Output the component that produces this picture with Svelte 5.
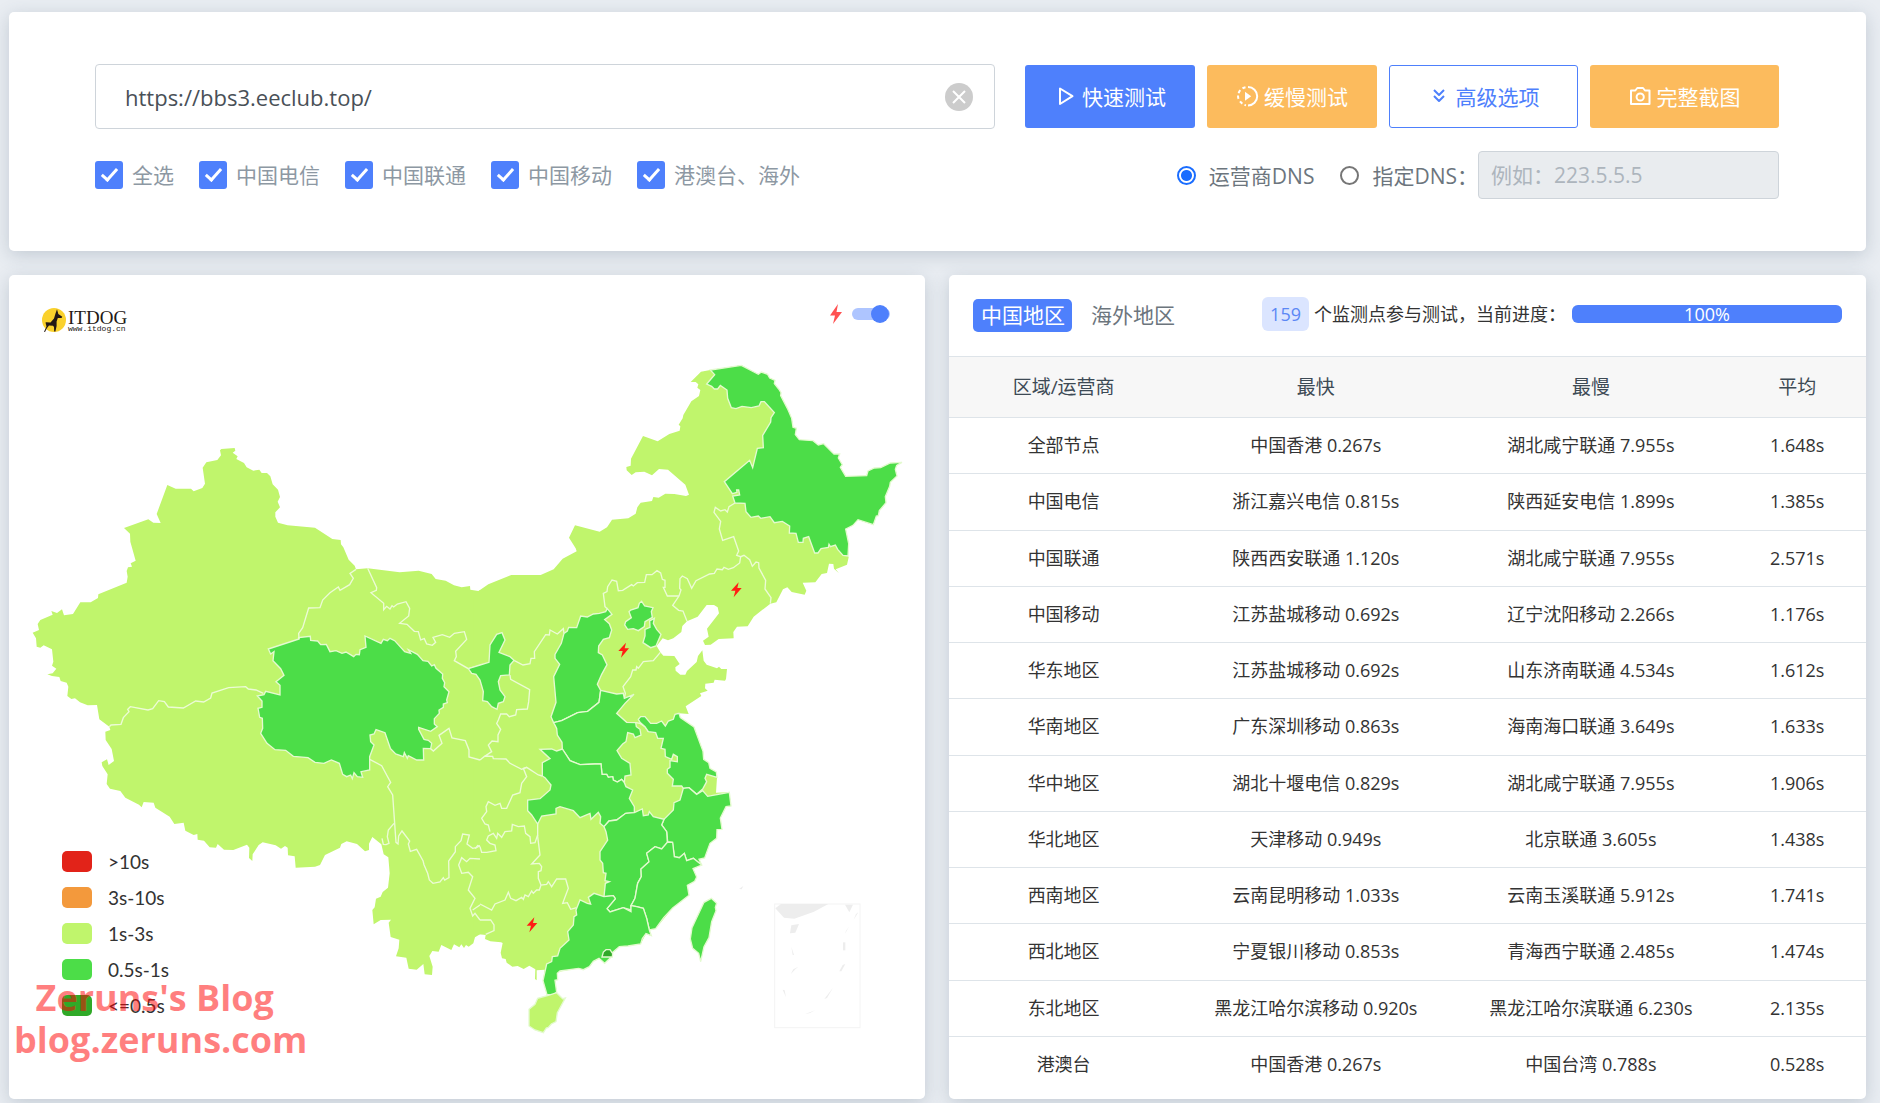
<script>
  let url = $state('https://bbs3.eeclub.top/');
  let dnsMode = $state('isp');
  let highlight = $state(true);
  let activeTab = $state('中国地区');
  const progress = 100;

  const carriers = ['全选', '中国电信', '中国联通', '中国移动', '港澳台、海外'];
  const tabs = ['中国地区', '海外地区'];

  const legend = [
    { label: '>10s', tone: 'red' },
    { label: '3s-10s', tone: 'orange' },
    { label: '1s-3s', tone: 'lime' },
    { label: '0.5s-1s', tone: 'green' },
    { label: '<=0.5s', tone: 'dark' }
  ];

  const rows = [
    ['全部节点', '中国香港 0.267s', '湖北咸宁联通 7.955s', '1.648s'],
    ['中国电信', '浙江嘉兴电信 0.815s', '陕西延安电信 1.899s', '1.385s'],
    ['中国联通', '陕西西安联通 1.120s', '湖北咸宁联通 7.955s', '2.571s'],
    ['中国移动', '江苏盐城移动 0.692s', '辽宁沈阳移动 2.266s', '1.176s'],
    ['华东地区', '江苏盐城移动 0.692s', '山东济南联通 4.534s', '1.612s'],
    ['华南地区', '广东深圳移动 0.863s', '海南海口联通 3.649s', '1.633s'],
    ['华中地区', '湖北十堰电信 0.829s', '湖北咸宁联通 7.955s', '1.906s'],
    ['华北地区', '天津移动 0.949s', '北京联通 3.605s', '1.438s'],
    ['西南地区', '云南昆明移动 1.033s', '云南玉溪联通 5.912s', '1.741s'],
    ['西北地区', '宁夏银川移动 0.853s', '青海西宁联通 2.485s', '1.474s'],
    ['东北地区', '黑龙江哈尔滨移动 0.920s', '黑龙江哈尔滨联通 6.230s', '2.135s'],
    ['港澳台', '中国香港 0.267s', '中国台湾 0.788s', '0.528s']
  ];

  // Land outline, western half
  const westLand =
    'M98,1088 117,1080 113,1062 121,1050 158,1034 154,1023 171,1029 186,1018 192,1036 219,1032 241,997 272,997 294,984 295,973 380,938 383,920 380,903 384,892 396,890 392,880 407,872 391,815 390,791 372,774 445,748 460,758 482,759 470,732 502,645 527,656 573,656 581,664 607,654 615,641 608,593 619,577 652,570 663,556 660,541 664,537 704,534 706,542 698,548 713,559 709,567 732,579 740,592 760,602 778,599 785,609 801,609 811,619 818,643 834,659 840,681 833,695 840,712 826,727 826,740 834,758 863,766 945,773 997,807 1022,810 1023,823 1030,832 1046,869 1064,887 1068,898 1103,895 1199,907 1256,902 1295,912 1307,927 1337,932 1362,946 1385,952 1410,948 1411,959 1435,963 1440,960 1500,961 1500,1990 1440,1993 1425,2002 1420,2020 1406,2030 1398,2025 1392,2034 1384,2023 1378,2032 1362,2023 1354,2040 1324,2025 1316,2045 1297,2043 1288,2058 1298,2090 1296,2115 1274,2113 1270,2082 1250,2099 1226,2096 1219,2063 1188,2059 1196,2035 1198,2009 1172,2001 1166,1958 1173,1949 1142,1950 1121,1963 1117,1920 1124,1912 1128,1886 1142,1880 1148,1866 1164,1853 1169,1810 1165,1762 1151,1753 1144,1723 1117,1701 1107,1721 1107,1740 1095,1744 1071,1722 1040,1714 1024,1722 1020,1733 975,1755 960,1785 945,1790 887,1793 884,1759 864,1756 863,1733 855,1728 843,1736 827,1726 788,1717 776,1725 758,1753 757,1773 747,1764 748,1733 741,1724 700,1740 672,1739 653,1722 648,1733 629,1732 612,1712 593,1709 592,1692 581,1695 556,1682 551,1658 523,1662 509,1640 466,1613 461,1598 431,1596 425,1612 417,1604 376,1583 361,1563 330,1556 320,1542 323,1513 307,1488 305,1477 321,1468 326,1485 342,1473 335,1437 317,1410 316,1385 331,1380 328,1370 298,1348 291,1305 263,1306 240,1297 225,1285 214,1287 202,1278 205,1250 200,1238 182,1233 178,1221 156,1218 142,1213 158,1210 169,1196 156,1187 160,1175 156,1138 131,1126 121,1133 110,1130 108,1105Z';

  // Land outline, eastern half (drawn inside the shifted group)
  const eastLand =
    'M0,750 25,733 94,705 182,705 221,688 248,656 290,634 287,625 267,593 285,556 359,575 381,562 396,539 445,535 467,521 472,502 482,488 516,483 520,471 536,473 556,461 583,462 618,468 627,464 616,434 564,389 537,387 516,406 493,395 467,397 455,405 440,391 439,381 452,377 453,356 489,288 533,304 568,282 599,272 601,259 596,254 608,235 610,225 634,184 657,168 661,150 652,143 655,133 647,126 632,126 663,95 691,90 784,76 835,103 844,96 863,103 869,114 885,121 883,131 896,147 903,158 902,167 922,205 935,235 939,262 949,265 946,284 958,299 999,302 1015,315 1031,311 1062,342 1079,342 1075,354 1087,374 1081,382 1097,409 1160,407 1164,393 1183,384 1202,383 1231,369 1266,367 1250,376 1246,388 1251,408 1231,427 1229,439 1216,470 1218,488 1198,512 1195,527 1189,528 1180,554 1134,539 1119,556 1097,567 1106,611 1104,648 1106,652 1101,674 1067,688 1077,700 1062,686 1060,672 1047,671 1041,699 1025,702 1006,727 968,728 979,752 974,764 935,756 922,742 909,748 889,787 871,791 821,830 803,859 771,860 760,876 761,895 716,897 692,914 675,915 669,902 686,890 681,866 717,820 713,802 702,795 680,795 653,830 621,844 607,858 604,876 580,895 564,901 548,895 530,918 541,937 550,947 583,948 599,972 586,982 587,992 601,1004 616,1004 621,993 650,966 654,948 667,931 671,962 680,974 711,985 717,980 724,987 741,987 738,1017 735,1022 704,1019 701,1028 676,1031 675,1045 683,1052 660,1060 664,1068 617,1099 626,1122 597,1120 601,1133 642,1161 669,1234 671,1258 686,1268 690,1285 709,1296 711,1312 708,1358 748,1357 753,1398 738,1400 721,1434 726,1468 711,1469 710,1495 690,1510 674,1554 657,1558 665,1575 639,1586 650,1611 644,1624 622,1636 627,1666 578,1704 527,1766 508,1770 514,1787 498,1781 482,1812 418,1820 374,1850 340,1864 328,1880 296,1885 236,1895 225,1921 230,1957 201,1964 189,1922 194,1889 170,1891 170,1921 165,1917 166,1888 148,1877 131,1887 113,1878 97,1880 80,1868 77,1857 66,1855 62,1838 68,1809 63,1807 31,1804 15,1797 17,1785 0,1783 -10,1785 -20,1783 -20,770Z';

  const westBorders = [
    'M1068,898 1050,910 1060,925 1049,944 1020,961 1015,951 990,968 968,990 960,1013 926,1014 908,1073 896,1090 897,1107',
    'M328,1370 333,1365 363,1363 370,1343 387,1325 383,1318 391,1310 444,1320 458,1316 476,1292 493,1295 505,1311 550,1314 587,1293 611,1296 632,1284 636,1269 686,1253 737,1250 745,1257 768,1260 790,1270',
    'M1103,895 1130,953 1129,961 1113,968 1151,1000 1151,1019 1160,1009 1170,1017 1176,1007 1181,1011 1192,1002 1218,995 1229,1015 1226,1038 1199,1060 1221,1063 1243,1084 1255,1085 1262,1110 1273,1106 1280,1122 1297,1126 1307,1117 1299,1102 1327,1094 1349,1102 1363,1090 1393,1085 1400,1108 1367,1144 1369,1160 1363,1172 1405,1196 1440,1187',
    'M1109,1468 1145,1487 1172,1537 1163,1550 1178,1575 1188,1717 1194,1722 1196,1698 1206,1683 1229,1713 1225,1722 1231,1744 1250,1738 1269,1772 1272,1784 1283,1810 1288,1830 1299,1840 1320,1836 1330,1823 1334,1830 1347,1823 1346,1773 1366,1745 1366,1730 1383,1712 1388,1692 1408,1695 1401,1722 1418,1735 1428,1733 1433,1727 1440,1730',
    'M1182,1660 1165,1680 1162,1700 1167,1720 1158,1724 1150,1723 1146,1705',
    'M1292,1436 1300,1443 1326,1420 1317,1396 1347,1375 1356,1404 1396,1412 1407,1440 1407,1461 1440,1470',
    'M1440,1767 1410,1765 1400,1775 1385,1763 1376,1785 1385,1810 1405,1807 1418,1820 1405,1860 1425,1885 1410,1915 1418,1938 1425,1930 1440,1950',
    'M1425,1735 1440,1727 M1418,1920 1440,1905'
  ];

  const eastBorders = [
    'M765,489 747,500 742,516 735,509 722,513 706,502 702,517 722,544 718,567 728,601 761,590 776,633 770,646 782,650 792,646 809,659 817,679 828,666 836,668 837,684 857,721 855,747 873,773 871,791',
    'M782,650 779,669 760,683 745,688 732,682 727,689 711,687 703,700 689,702 648,722 635,745 622,716 607,708 600,716 599,745 603,750 597,768 578,796 596,811 609,813 621,844',
    'M597,768 562,768 550,742 555,742 555,721 547,718 542,699 531,692 516,704 499,704 494,727 472,728 460,738 455,734 428,751 415,752 410,724 396,720 383,740 381,755 370,760 375,800 382,806',
    'M252,880 250,866 232,882 210,870 208,885 197,884 163,935 164,955 153,955 150,971 129,975 102,961',
    'M90,1005 92,1018 149,1049 146,1085 142,1107 110,1109 107,1125 88,1130 80,1122 62,1122 55,1140 50,1150 62,1168 54,1185 54,1205 36,1203 25,1215 35,1235 12,1250 0,1260 15,1248 38,1249 40,1256 78,1257 90,1270 125,1288 140,1282 175,1305 187,1308',
    'M541,937 520,962 490,965 475,985 470,980 468,990 458,990 452,1010 429,1040 436,1060 433,1075',
    'M467,1148 480,1150 495,1160 505,1175',
    'M140,1282 130,1285 140,1310 125,1330 120,1358 98,1365 80,1405 65,1405 60,1390 45,1396 25,1385 18,1400 20,1415 5,1435 15,1452 25,1455 30,1475',
    'M0,1520 5,1537 20,1537 48,1532 45,1515 30,1510 20,1500 25,1488 40,1480 50,1495 53,1480 65,1492 75,1475 95,1473 97,1453 115,1460 133,1458 137,1480 150,1490 152,1510 165,1508 173,1485',
    'M173,1452 173,1490 180,1545 155,1572 178,1570 185,1580 183,1592 175,1595 175,1615 183,1635',
    'M0,1692 35,1710 45,1692 75,1680 85,1657 92,1675 108,1682 125,1672 130,1678 135,1665 145,1670 155,1653 160,1660 170,1650 178,1650 183,1635 200,1633 205,1625 215,1640 230,1617 257,1617 265,1645 248,1690 262,1688 272,1708 290,1703',
    'M0,1740 32,1740 42,1755 42,1772 17,1783'
  ];

  const qinghai =
    'M805,1137 897,1107 896,1103 931,1099 932,1111 953,1113 962,1124 979,1123 990,1145 1008,1142 1026,1150 1038,1146 1061,1160 1068,1153 1078,1154 1080,1139 1098,1132 1095,1098 1143,1120 1150,1108 1162,1112 1170,1105 1184,1112 1214,1145 1232,1150 1225,1139 1252,1153 1269,1172 1284,1174 1295,1188 1303,1184 1308,1195 1328,1212 1327,1225 1334,1238 1332,1250 1347,1265 1340,1290 1342,1298 1330,1302 1330,1312 1317,1320 1318,1330 1303,1346 1303,1362 1312,1370 1292,1384 1256,1372 1256,1378 1272,1408 1285,1411 1295,1420 1292,1436 1270,1435 1271,1470 1250,1470 1225,1457 1222,1465 1213,1448 1210,1460 1187,1452 1171,1435 1155,1388 1128,1379 1122,1392 1110,1395 1112,1415 1122,1425 1109,1460 1109,1500 1083,1505 1088,1522 1072,1520 1062,1508 1057,1526 1052,1515 1040,1520 1028,1513 1018,1480 994,1470 972,1480 945,1477 924,1463 880,1459 857,1441 825,1439 801,1420 782,1390 788,1375 787,1345 779,1342 774,1315 786,1312 786,1293 772,1278 792,1274 797,1264 840,1275 840,1246 828,1235 852,1216 842,1196 819,1172 822,1145 812,1152Z';

  const fastProvinces = [
    { name: '黑龙江', d: 'M691,90 784,76 835,103 844,96 863,103 869,114 885,121 883,131 896,147 903,158 902,167 922,205 935,235 939,262 949,265 946,284 958,299 999,302 1015,315 1031,311 1062,342 1079,342 1075,354 1087,374 1081,382 1097,409 1160,407 1164,393 1183,384 1202,383 1231,369 1266,367 1250,376 1246,388 1251,408 1231,427 1229,439 1216,470 1218,488 1198,512 1195,527 1189,528 1180,554 1134,539 1119,556 1097,567 1106,611 1104,648 1089,646 1073,628 1066,615 1051,620 1047,613 1045,622 1023,626 1014,639 1004,639 986,590 970,595 969,607 955,607 948,580 928,579 929,558 907,544 883,548 870,530 842,535 835,528 813,532 798,515 795,490 765,489 758,468 779,465 776,450 770,450 771,457 757,461 733,425 809,361 818,383 832,325 850,323 848,286 872,246 873,233 883,218 853,185 843,185 837,198 814,203 786,199 768,206 754,203 743,175 741,150 721,136 713,147 703,147 695,139 680,132 704,104Z' },
    { name: '山西', d: 'M382,806 377,815 358,820 340,822 322,831 302,828 290,863 266,862 262,873 252,880 244,910 225,943 225,955 239,973 221,1010 228,1087 213,1130 221,1148 245,1142 293,1118 323,1114 357,1087 362,1051 352,1033 365,1003 381,974 367,945 355,938 356,918 370,898 388,893 395,870 388,851 374,839 396,823Z' },
    { name: '宁夏', d: 'M-35,986 0,975 27,967 30,915 50,883 66,878 75,900 57,937 90,950 102,961 90,975 88,1005 62,1007 55,1025 60,1050 75,1070 70,1085 55,1090 51,1108 35,1100 22,1085 8,1082 10,1055 0,1020 -12,1003 -25,1000Z' },
    { name: '北京', d: 'M485,784 494,798 519,803 514,815 517,832 495,845 493,860 475,872 460,866 443,868 434,855 437,845 454,833 447,815 452,810 474,803 478,790Z' },
    { name: '天津', d: 'M523,835 520,850 530,868 543,883 528,918 512,923 489,908 495,888 495,868 510,862 509,843Z' },
    { name: '河南', d: 'M362,1051 410,1062 430,1060 433,1075 462,1063 435,1090 410,1120 440,1147 467,1148 469,1160 480,1168 483,1185 465,1193 460,1182 443,1178 438,1205 428,1212 411,1232 425,1255 450,1270 453,1305 435,1308 433,1328 425,1318 412,1326 400,1320 398,1310 385,1312 380,1303 366,1303 363,1272 345,1272 300,1274 270,1262 247,1227 246,1207 232,1185 230,1165 221,1148 245,1142 293,1118 323,1114 357,1087Z' },
    { name: '湖北', d: 'M247,1227 230,1233 215,1227 180,1228 210,1256 187,1268 187,1308 195,1313 213,1335 210,1350 180,1376 143,1380 143,1412 155,1425 173,1452 185,1428 228,1422 228,1405 240,1400 280,1412 300,1433 330,1420 333,1438 355,1417 362,1430 360,1450 372,1460 387,1443 410,1440 437,1420 463,1418 463,1400 448,1375 458,1350 438,1340 433,1328 425,1318 412,1326 400,1320 398,1310 385,1312 380,1303 366,1303 363,1272 345,1272 300,1274 270,1262Z' },
    { name: '江苏', d: 'M597,1120 601,1133 642,1161 669,1234 671,1258 686,1268 690,1285 709,1296 711,1312 680,1303 675,1315 680,1325 668,1347 650,1363 627,1343 610,1345 605,1338 577,1338 580,1318 562,1300 562,1288 570,1282 570,1262 592,1265 592,1250 580,1243 575,1258 556,1250 555,1228 543,1225 550,1195 533,1195 527,1178 505,1175 495,1160 480,1147 475,1138 482,1130 495,1130 512,1150 530,1150 545,1143 556,1158 565,1143 580,1138 585,1123Z' },
    { name: '浙江', d: 'M610,1345 627,1343 650,1363 668,1352 683,1369 748,1357 753,1398 738,1400 721,1434 726,1468 711,1469 710,1495 690,1510 674,1554 657,1558 665,1575 640,1555 620,1562 613,1540 598,1553 583,1550 577,1507 563,1505 560,1475 545,1455 552,1438 580,1410 582,1388 600,1380Z' },
    { name: '江西', d: 'M372,1460 387,1443 410,1440 437,1420 463,1418 487,1407 490,1427 505,1425 508,1415 520,1430 552,1438 545,1455 560,1475 562,1507 545,1527 525,1520 500,1540 507,1565 483,1587 484,1610 473,1630 465,1675 453,1697 453,1710 430,1703 390,1716 381,1706 406,1676 400,1667 372,1670 376,1630 388,1625 375,1622 378,1600 370,1598 368,1570 360,1560 360,1535 383,1500 378,1475Z' },
    { name: '福建', d: 'M562,1507 578,1507 583,1550 598,1553 613,1540 620,1562 640,1555 665,1575 639,1586 650,1611 644,1624 622,1636 627,1666 604,1684 578,1704 551,1733 527,1766 508,1770 500,1735 490,1705 470,1700 453,1697 465,1675 473,1630 484,1610 483,1587 507,1565 500,1540 525,1520 545,1527Z' },
    { name: '广东', d: 'M372,1670 342,1660 325,1672 332,1692 322,1690 300,1680 288,1710 290,1725 282,1730 280,1755 263,1775 267,1800 240,1825 233,1848 217,1850 215,1865 200,1872 189,1922 201,1964 220,1964 230,1957 225,1921 233,1919 232,1900 240,1893 296,1885 310,1889 328,1880 340,1864 357,1855 374,1870 390,1855 397,1838 418,1820 444,1818 482,1812 487,1796 498,1781 514,1787 508,1770 500,1735 490,1705 470,1700 453,1697 453,1715 430,1703 390,1716 381,1706 406,1676 400,1667Z' },
    { name: '台湾', d: 'M694,1675 710,1690 706,1702 708,1712 695,1745 687,1793 672,1820 662,1865 656,1840 638,1825 631,1797 636,1763 672,1687Z' }
  ];

  const slowProvinces = [
    { name: '海南', d: 'M230,1958 248,1976 256,1974 232,2018 228,2045 214,2052 205,2062 199,2064 190,2078 165,2070 147,2058 147,2008 165,1993 173,1975 205,1966Z' }
  ];

  const seaMarks = [
    'M886,1705 903,1692 1045,1692 1002,1715 943,1736 912,1733Z',
    'M1095,1694 1119,1694 1108,1717Z',
    'M934,1756 957,1752 946,1778 930,1780Z',
    'M1135,1717 1121,1739 1128,1722Z',
    'M1107,1760 1095,1781 1098,1772Z',
    'M1089,1807H1096V1831H1089Z',
    'M1096,1872 1084,1894H1078L1088,1875Z',
    'M1059,1943 1041,1974 1033,1977Z',
    'M908,1949 914,1951 918,1972Z',
    'M934,1820 942,1845 938,1845Z',
    'M955,1880 946,1888 932,1903 940,1888Z',
    'M1007,2010 990,2019 974,2023Z',
    'M777,1647 790,1638 785,1648Z'
  ];

  const bolts = [[769, 749], [431, 930], [156, 1754]];
</script>

<main>
  <section class="card controls">
    <form class="row" onsubmit={(e) => e.preventDefault()}>
      <div class="url-box">
        <input class="url" type="text" aria-label="URL" bind:value={url} />
        <button class="clear" type="button" aria-label="清除" onclick={() => (url = '')}>
          <svg viewBox="0 0 28 28"><circle cx="14" cy="14" r="14" /><path d="M8 8 20 20M20 8 8 20" /></svg>
        </button>
      </div>
      <div class="buttons">
        <button class="btn blue" type="submit">
          <svg viewBox="0 0 24 24"><path class="line" d="M6 4.500V20L18.500 12.200Z" /></svg>快速测试
        </button>
        <button class="btn amber" type="button">
          <svg viewBox="0 0 24 24">
            <path class="line" d="M12 3a9.200 9.200 0 0 1 0 18.400M9.500 3.200a9 9 0 0 0-3 1.200M4.300 6.200a9 9 0 0 0-1.700 3M2 11.500a9 9 0 0 0 .5 3.300M4 17.400a9 9 0 0 0 2.400 2.200M8.500 20.900a9 9 0 0 0 1.500.4" />
            <path class="solid" d="M9 7.800v9l6.200-4.500Z" />
          </svg>缓慢测试
        </button>
        <button class="btn outline" type="button">
          <svg viewBox="0 0 24 24"><path class="line" d="m6 6 5 5 5-5M6 12l5 5 5-5" /></svg>高级选项
        </button>
        <button class="btn amber" type="button">
          <svg viewBox="0 0 24 24">
            <path class="line" d="M2 6.500H6.300L8.300 4H14L16 6.500H20.500V20H2Z" />
            <circle class="line" cx="11.200" cy="13" r="3.600" />
          </svg>完整截图
        </button>
      </div>
    </form>
    <div class="options">
      <div class="checks">
        {#each carriers as name}
          <label><input type="checkbox" checked />{name}</label>
        {/each}
      </div>
      <div class="dns">
        <label><input type="radio" name="dns" value="isp" bind:group={dnsMode} />运营商DNS</label>
        <label><input type="radio" name="dns" value="custom" bind:group={dnsMode} />指定DNS：</label>
        <input class="dns-ip" type="text" aria-label="DNS" placeholder="例如：223.5.5.5" disabled={dnsMode === 'isp'} />
      </div>
    </div>
  </section>

  <div class="panels">
    <section class="card map">
      <svg class="china" viewBox="27 15 2748 2472" role="img" aria-label="中国地图">
        <path class="land" d={westLand} />
        <g transform="translate(1440 210)">
          <path class="land" d={eastLand} />
        </g>
        <path class="province fast" d={qinghai} />
        {#each westBorders as d}<path class="border" {d} />{/each}
        <g transform="translate(1440 210)">
          {#each eastBorders as d}<path class="border" {d} />{/each}
          {#each fastProvinces as p (p.name)}<path class="province fast" d={p.d} />{/each}
          {#each slowProvinces as p (p.name)}<path class="province slow" d={p.d} />{/each}
          <path class="province fastest" d="M366,1851 370,1836 378,1829 390,1829 398,1841 397,1851Z" />
          <rect class="inset" x="884" y="1692" width="256" height="371" />
          {#each seaMarks as d}<path class="sea" {d} />{/each}
          {#each bolts as [x, y]}
            <path class="bolt" transform="translate({x} {y})" d="M7-22-16 3H-3L-8 23 16-5H3Z" />
          {/each}
        </g>
      </svg>

      <header class="map-head">
        <svg class="logo" viewBox="0 0 95 26" role="img" aria-label="ITDOG">
          <circle cx="13" cy="13" r="12" fill="#fad12c" />
          <path fill="#231815" d="M16 2.200 17.300 7 21.300 9.700 20.500 11H16.800L15.600 14.500V19L14.400 24.600H13.200L13 20 12 18.800 8 18.400 6 21 4 25 3 24.700 5.500 19.500 4.500 15.500 5.200 15.200 9.500 15.400 13 11.500 14.500 6.500Z" />
          <text class="logo-name" x="27" y="17">ITDOG</text>
          <text class="logo-site" x="27" y="24">www.itdog.cn</text>
        </svg>
        <label class="toggle">
          <svg viewBox="0 0 12 20"><path d="M8 0 0 11.500H5L3 20 12 8H6.500Z" /></svg>
          <input type="checkbox" aria-label="闪电标记" bind:checked={highlight} />
        </label>
      </header>

      <ul class="legend">
        {#each legend as item}
          <li><span class="swatch {item.tone}"></span>{item.label}</li>
        {/each}
      </ul>

      <p class="watermark"><span class="blog">Zeruns's Blog</span><span>blog.zeruns.com</span></p>
    </section>

    <section class="card results">
      <header class="results-head">
        <nav>
          {#each tabs as tab}
            <button type="button" class:active={activeTab === tab} onclick={() => (activeTab = tab)}>{tab}</button>
          {/each}
        </nav>
        <div class="status">
          <span class="count">159</span>
          <span class="note">个监测点参与测试，当前进度：</span>
          <div class="progress" role="progressbar" aria-label="当前进度" aria-valuenow={progress} aria-valuemin="0" aria-valuemax="100">
            <div class="bar" style:width="{progress}%">{progress}%</div>
          </div>
        </div>
      </header>
      <table>
        <thead>
          <tr><th>区域/运营商</th><th>最快</th><th>最慢</th><th>平均</th></tr>
        </thead>
        <tbody>
          {#each rows as row}
            <tr>{#each row as cell}<td>{cell}</td>{/each}</tr>
          {/each}
        </tbody>
      </table>
    </section>
  </div>
</main>

<style>
  :global(body) {
    background: #e9edf2;
    font-family: 'Open Sans', 'Noto Sans CJK SC', sans-serif;
    font-size: 18px;
    color: #333;
  }
  main {
    display: grid;
    gap: 24px;
    padding: 12px 14px 4px 9px;
  }
  input,
  button {
    font: inherit;
    margin: 0;
    box-sizing: border-box;
  }
  .card {
    background: #fff;
    border-radius: 5px;
    box-shadow: 0 4px 18px rgba(60, 80, 105, 0.22);
  }

  .controls {
    padding: 52px 87px 52px 86px;
    font-size: 21px;
  }
  .row {
    display: grid;
    grid-template-columns: 900fr 754fr;
    gap: 30px;
    align-items: center;
  }
  .url-box {
    display: flex;
    align-items: center;
    border: 1px solid #ced4da;
    border-radius: 4px;
    padding: 0 21px 0 29px;
    height: 65px;
    box-sizing: border-box;
  }
  .url {
    flex: 1;
    min-width: 0;
    border: 0;
    padding: 0;
    outline: 0;
    font-size: 22px;
    color: #495057;
    background: none;
  }
  .clear {
    border: 0;
    padding: 0;
    background: none;
    width: 28px;
    height: 28px;
  }
  .clear svg {
    display: block;
  }
  .clear circle {
    fill: #ccc;
  }
  .clear path {
    stroke: #fff;
    stroke-width: 2;
  }
  .buttons {
    display: grid;
    grid-template-columns: 170fr 170fr 189fr 189fr;
    gap: 12px;
  }
  .btn {
    display: flex;
    align-items: center;
    justify-content: center;
    gap: 4px;
    height: 63px;
    padding: 0 0 2px;
    border: 1px solid transparent;
    border-radius: 3px;
    color: #fff;
    white-space: nowrap;
  }
  .btn svg {
    width: 24px;
    height: 24px;
  }
  .line {
    fill: none;
    stroke: currentColor;
    stroke-width: 2;
    stroke-linejoin: round;
  }
  .solid {
    fill: currentColor;
  }
  .blue {
    background: #4e80fc;
  }
  .amber {
    background: #fcbb5d;
  }
  .outline {
    background: #fff;
    border-color: #4e80fc;
    color: #4e80fc;
  }
  .options {
    display: flex;
    align-items: center;
    justify-content: space-between;
    margin-top: 22px;
    height: 48px;
  }
  .checks {
    display: flex;
    gap: 25px;
    color: #8d98a3;
  }
  label {
    display: flex;
    align-items: center;
    white-space: nowrap;
  }
  .checks label {
    gap: 9px;
    line-height: 28px;
  }
  .checks input {
    appearance: none;
    width: 28px;
    height: 28px;
    border-radius: 3px;
    background: #4e80fc;
    display: grid;
    place-items: center;
  }
  .checks input:checked::after {
    content: '';
    width: 6px;
    height: 13px;
    border: solid #fff;
    border-width: 0 3px 3px 0;
    transform: translateY(-2px) rotate(42deg);
  }
  .dns {
    display: flex;
    align-items: center;
    color: #6c757d;
  }
  .dns label {
    gap: 13px;
  }
  .dns label + label {
    margin-left: 26px;
  }
  .dns input[type='radio'] {
    appearance: none;
    width: 19px;
    height: 19px;
    border: 2px solid #767676;
    border-radius: 50%;
  }
  .dns input[type='radio']:checked {
    border-color: #1a6dff;
    background: radial-gradient(circle, #1a6dff 5px, #fff 6px);
  }
  .dns-ip {
    width: 301px;
    height: 48px;
    padding: 0 12px;
    border: 1px solid #ced4da;
    border-radius: 4px;
    background: #e9ecef;
  }
  .dns-ip::placeholder {
    color: #adb5bd;
  }

  .panels {
    display: grid;
    grid-template-columns: 916fr 917fr;
    gap: 24px;
  }

  .map {
    display: grid;
    grid-template: 'stack' 1fr / 1fr;
  }
  .map > * {
    grid-area: stack;
  }
  .china {
    display: block;
    width: 100%;
  }
  .land {
    fill: #c0f56c;
  }
  .border {
    fill: none;
    stroke: #ecfbd6;
    stroke-width: 4;
  }
  .province {
    stroke: #e4fad0;
    stroke-width: 4;
  }
  .fast {
    fill: #4cdd48;
  }
  .slow {
    fill: #c0f56c;
  }
  .fastest {
    fill: #30a928;
  }
  .inset {
    fill: none;
    stroke: #f4f4f4;
    stroke-width: 3;
  }
  .sea {
    fill: #ededed;
  }
  .bolt {
    fill: #ff1e14;
  }
  .map-head {
    display: flex;
    justify-content: space-between;
    align-items: flex-start;
    align-self: start;
    padding: 29px 35px 0 32px;
  }
  .logo {
    width: 95px;
    height: 26px;
    margin-top: 3px;
  }
  .logo text {
    fill: #231815;
  }
  .logo-name {
    font: 19px 'Liberation Serif', serif;
  }
  .logo-site {
    font: 8px 'Liberation Mono', monospace;
  }
  .toggle {
    gap: 10px;
  }
  .toggle svg {
    width: 12px;
    height: 20px;
    fill: #ff5252;
  }
  .toggle input {
    appearance: none;
    display: flex;
    align-items: center;
    justify-content: flex-end;
    width: 38px;
    height: 12px;
    border-radius: 6px;
    background: #aec5ff;
    padding-right: 1px;
  }
  .toggle input::after {
    content: '';
    width: 18px;
    height: 18px;
    border-radius: 50%;
    background: #4e80fc;
  }
  .toggle input:not(:checked) {
    justify-content: flex-start;
  }
  .legend {
    align-self: end;
    justify-self: start;
    list-style: none;
    margin: 0;
    padding: 0 0 76px 53px;
    font-family: Lato, sans-serif;
    font-size: 19px;
  }
  .legend li {
    display: flex;
    align-items: center;
    gap: 16px;
    height: 36px;
  }
  .swatch {
    width: 30px;
    height: 21px;
    border-radius: 5px;
  }
  .red {
    background: #e22319;
  }
  .orange {
    background: #f3993c;
  }
  .lime {
    background: #c0f56c;
  }
  .green {
    background: #4cdd48;
  }
  .dark {
    background: #30a928;
  }
  .watermark {
    align-self: end;
    justify-self: start;
    display: grid;
    justify-items: center;
    margin: 0;
    padding: 0 0 38px 5px;
    font-size: 36px;
    font-weight: 700;
    line-height: 42px;
    color: rgba(255, 0, 0, 0.5);
  }
  .blog {
    padding-right: 12px;
  }

  .results {
    display: grid;
    grid-template-rows: auto 1fr;
    padding-bottom: 7px;
  }
  .results-head {
    display: flex;
    justify-content: space-between;
    align-items: flex-start;
    padding: 22px 24px 24px;
  }
  nav {
    display: flex;
    gap: 11px;
    padding-top: 2px;
    font-size: 21px;
  }
  nav button {
    border: 0;
    border-radius: 5px;
    padding: 0 7px 0 8px;
    height: 33px;
    line-height: 33px;
    background: none;
    color: #6c757d;
  }
  nav .active {
    background: #4e80fc;
    color: #fff;
  }
  .status {
    display: flex;
    align-items: center;
    line-height: 34px;
  }
  .count {
    padding: 0 8px;
    margin-right: 5px;
    border-radius: 6px;
    background: #dbe5ff;
    color: #5b88f5;
  }
  .progress {
    width: 270px;
    height: 18px;
    margin-left: 6px;
    border-radius: 6px;
    background: #e9ecef;
  }
  .bar {
    height: 100%;
    line-height: 18px;
    text-align: center;
    color: #fff;
    border-radius: 6px;
    background: #4e80fc;
  }
  table {
    width: 100%;
    height: 100%;
    table-layout: fixed;
    border-collapse: collapse;
    text-align: center;
  }
  th,
  td {
    padding: 0;
    height: 55px;
    line-height: 27px;
    border-top: 1px solid #dee4e9;
  }
  th {
    height: 60px;
    background: #f7f7f7;
    color: #3d4a55;
    font-size: 19px;
    font-weight: 400;
  }
  th:nth-child(1) {
    width: 25%;
  }
  th:nth-child(2),
  th:nth-child(3) {
    width: 30%;
  }
</style>
